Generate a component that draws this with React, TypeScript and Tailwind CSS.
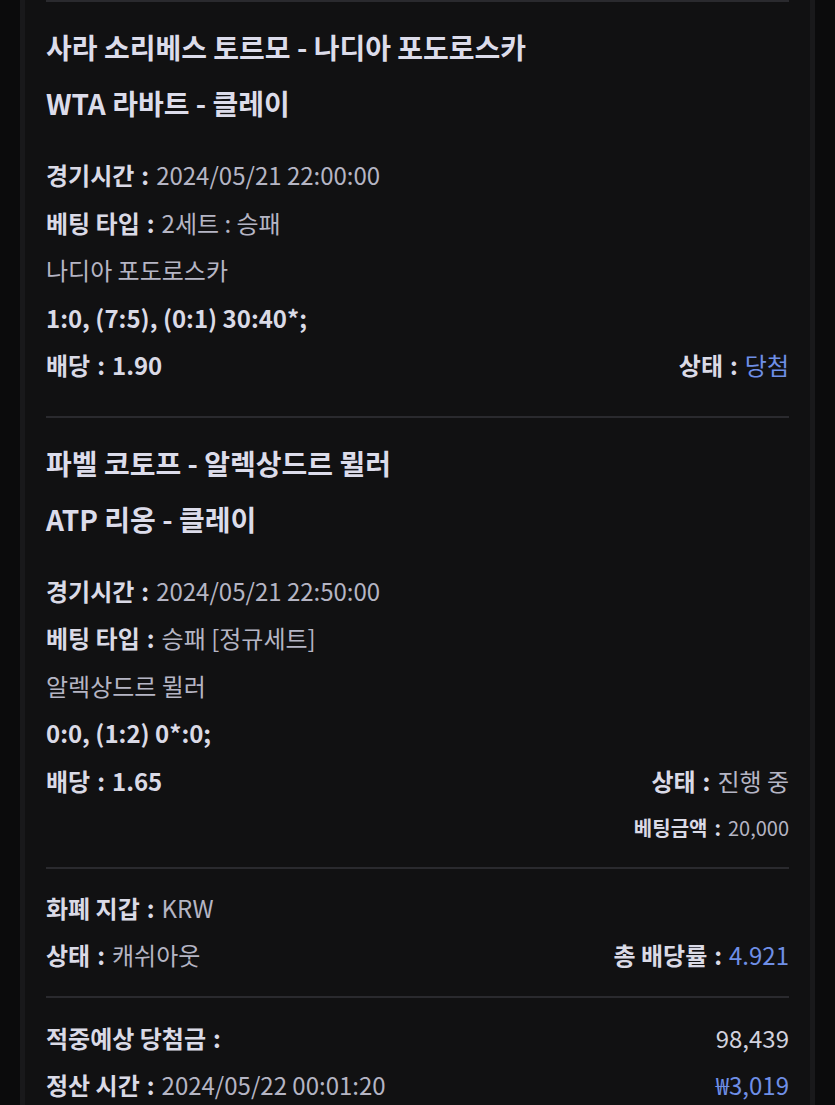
import React from 'react';

const FONT = { fontFamily: '"Noto Sans CJK KR", "Noto Sans", sans-serif' };

function Field({ label, value, valueClass = 'text-[#b5b5c4]' }: { label: string; value: string; valueClass?: string }) {
  return (
    <span>
      <span className="font-bold text-[#dadae6]">
        {label}
        <span className="mx-[7px]">:</span>
      </span>
      <span className={valueClass}>{value}</span>
    </span>
  );
}

interface Match {
  title: string;
  league: string;
  time: string;
  betType: string;
  pick: string;
  score: string;
  odds: string;
  status: string;
  statusClass: string;
}

const matches: Match[] = [
  {
    title: '사라 소리베스 토르모 - 나디아 포도로스카',
    league: 'WTA 라바트 - 클레이',
    time: '2024/05/21 22:00:00',
    betType: '2세트 : 승패',
    pick: '나디아 포도로스카',
    score: '1:0, (7:5), (0:1) 30:40*;',
    odds: '1.90',
    status: '당첨',
    statusClass: 'text-[#6f8fe6]',
  },
  {
    title: '파벨 코토프 - 알렉상드르 뮐러',
    league: 'ATP 리옹 - 클레이',
    time: '2024/05/21 22:50:00',
    betType: '승패 [정규세트]',
    pick: '알렉상드르 뮐러',
    score: '0:0, (1:2) 0*:0;',
    odds: '1.65',
    status: '진행 중',
    statusClass: 'text-[#b5b5c4]',
  },
];

function MatchBlock({ m, last }: { m: Match; last?: boolean }) {
  return (
    <div className={`border-t-2 border-[#2a2a2e] pt-[17px] ${last ? 'pb-[15px]' : 'pb-[27px]'}`}>
      <div className="text-[28px] font-bold leading-[56px] text-[#dcdcea]">
        <div>{m.title}</div>
        <div>{m.league}</div>
      </div>
      <div className="mt-[20px] text-[24px] leading-[47.5px]">
        <div><Field label="경기시간" value={m.time} /></div>
        <div><Field label="베팅 타입" value={m.betType} /></div>
        <div className="text-[#b5b5c4]">{m.pick}</div>
        <div className="font-bold text-[#dadae6]">{m.score}</div>
        <div className="flex justify-between">
          <span className="font-bold text-[#dadae6]">
            배당<span className="mx-[7px]">:</span>{m.odds}
          </span>
          <Field label="상태" value={m.status} valueClass={m.statusClass} />
        </div>
        {last && (
          <div className="flex justify-end text-[20px]">
            <Field label="베팅금액" value="20,000" />
          </div>
        )}
      </div>
    </div>
  );
}

export default function App() {
  return (
    <div className="min-h-screen bg-[#0b0b0c] px-[20px]" style={FONT}>
      <div className="min-h-screen border-x-[5px] border-[#19191b] bg-[#111112] px-[21px]">
        {matches.map((m, i) => (
          <MatchBlock key={i} m={m} last={i === matches.length - 1} />
        ))}
        <div className="border-t-2 border-[#2a2a2e] pt-[15px] pb-[17px] text-[24px] leading-[47.5px]">
          <div><Field label="화폐 지갑" value="KRW" /></div>
          <div className="flex justify-between">
            <Field label="상태" value="캐쉬아웃" />
            <Field label="총 배당률" value="4.921" valueClass="text-[#6f8fe6]" />
          </div>
        </div>
        <div className="border-t-2 border-[#2a2a2e] pt-[16px] text-[24px] leading-[47.5px]">
          <div className="flex justify-between">
            <span className="font-bold text-[#dadae6]">
              적중예상 당첨금<span className="ml-[7px]">:</span>
            </span>
            <span className="text-[#d2d2de]">98,439</span>
          </div>
          <div className="flex justify-between">
            <Field label="정산 시간" value="2024/05/22 00:01:20" />
            <span className="text-[#6f8fe6]">₩3,019</span>
          </div>
        </div>
      </div>
    </div>
  );
}
